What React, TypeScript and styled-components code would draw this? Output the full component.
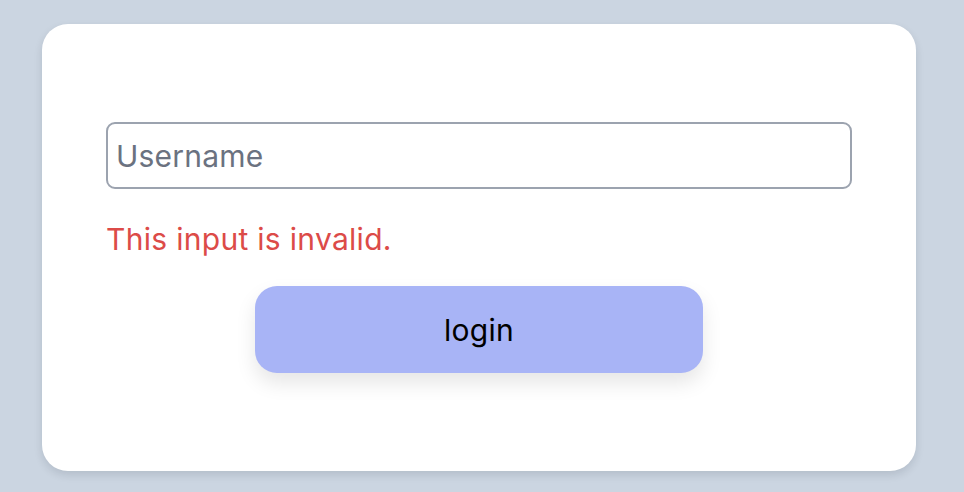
import React from "react";
import styled, { createGlobalStyle } from "styled-components";

const Global = createGlobalStyle`
  html, body { margin: 0; padding: 0; background: #cbd5e1; }
  body { font-family: Inter, "Noto Sans", sans-serif; }
  * { box-sizing: border-box; }
`;

const Page = styled.div`
  width: 964px;
  height: 492px;
  padding: 24px 48px 0 42px;
`;

const Card = styled.div`
  background: #ffffff;
  border-radius: 26px;
  height: 447px;
  padding: 98px 64px 0 64px;
  display: flex;
  flex-direction: column;
  box-shadow: 0 4px 8px rgba(15, 23, 42, 0.12);
`;

const Input = styled.input`
  width: 746px;
  height: 67px;
  border: 2px solid #9ca3af;
  border-radius: 9px;
  padding: 0 8px;
  font-family: Inter, "Noto Sans", sans-serif;
  font-size: 30px;
  letter-spacing: 0.2px;
  color: #111827;
  outline: none;
  &::placeholder { color: #6b7280; }
`;

const ErrorText = styled.div`
  margin-top: 32px;
  color: #dc4b48;
  font-size: 30px;
  letter-spacing: 0.3px;
  line-height: 36px;
`;

const Button = styled.button`
  align-self: center;
  margin-top: 29px;
  width: 448px;
  height: 87px;
  border: none;
  border-radius: 22px;
  background: #a8b4f6;
  color: #000;
  font-family: Inter, "Noto Sans", sans-serif;
  font-size: 30px;
  letter-spacing: 0.3px;
  box-shadow: 0 10px 20px rgba(0, 0, 0, 0.1);
  cursor: pointer;
`;

export default function App() {
  return (
    <Page>
      <Global />
      <Card>
        <Input placeholder="Username" />
        <ErrorText>This input is invalid.</ErrorText>
        <Button>login</Button>
      </Card>
    </Page>
  );
}
